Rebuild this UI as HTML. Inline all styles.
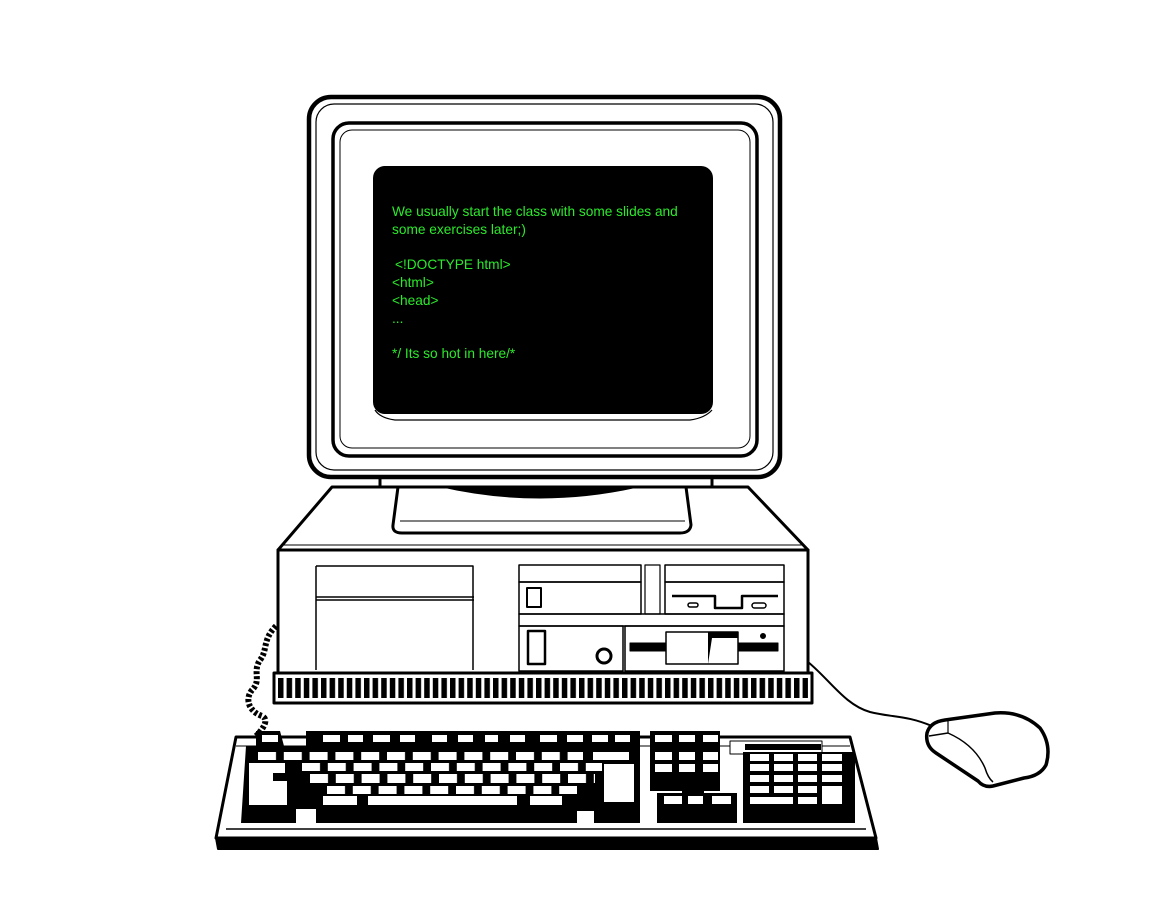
<!DOCTYPE html>
<html><head><meta charset="utf-8"><style>
html,body{margin:0;padding:0;background:#fff;width:1154px;height:920px;overflow:hidden}
svg{display:block}
text{font-family:"Liberation Sans",sans-serif;font-size:13.7px;fill:#2bea2b;letter-spacing:0}
</style></head><body>
<svg width="1154" height="920" viewBox="0 0 1154 920" xmlns="http://www.w3.org/2000/svg">
<defs>
<pattern id="r1" x="258" y="0" width="25.8" height="20" patternUnits="userSpaceOnUse"><rect x="0" y="0" width="18" height="20" fill="#fff"/></pattern>
<pattern id="r2" x="302" y="0" width="25.8" height="20" patternUnits="userSpaceOnUse"><rect x="0" y="0" width="18" height="20" fill="#fff"/></pattern>
<pattern id="r3" x="310" y="0" width="25.8" height="20" patternUnits="userSpaceOnUse"><rect x="0" y="0" width="18" height="20" fill="#fff"/></pattern>
<pattern id="r4" x="327" y="0" width="25.8" height="20" patternUnits="userSpaceOnUse"><rect x="0" y="0" width="18" height="20" fill="#fff"/></pattern>
<pattern id="vent" x="278" y="0" width="8.6" height="40" patternUnits="userSpaceOnUse"><rect x="0" y="0" width="5.5" height="40" fill="#000"/></pattern>
</defs>
<g fill="none" stroke="#000" stroke-linejoin="round">
<path d="M276,626 C262,640 268,650 260,660 C252,672 262,680 252,690 C244,700 250,712 262,716 C270,720 262,730 256,736" stroke-width="6" stroke-dasharray="3 2"/>
<path d="M808,662 C830,680 845,705 870,712 C895,718 905,715 932,726" stroke-width="2"/>
<path d="M332,487 L748,487 L808,550 L278,550 Z" fill="#fff" stroke-width="3"/>
<path d="M284,545 L802,545" stroke-width="1"/>
<rect x="278" y="550" width="530" height="123" fill="#fff" stroke-width="3"/>
<rect x="274" y="673" width="538" height="30" fill="#fff" stroke-width="3"/>
<rect x="278" y="678" width="530" height="20" fill="url(#vent)" stroke="none"/>
<path d="M316,566 L473,566 L473,670 M316,566 L316,670 M316,597 L474,597 M316,600 L474,600" stroke-width="1.5"/>
<rect x="519" y="565" width="122" height="17" stroke-width="1.5"/>
<rect x="519" y="582" width="122" height="32" stroke-width="1.5"/>
<rect x="527" y="588" width="14" height="19" stroke-width="2"/>
<rect x="645" y="565" width="15" height="49" stroke-width="1.2"/>
<rect x="665" y="565" width="119" height="17" stroke-width="1.5"/>
<rect x="665" y="582" width="119" height="32" stroke-width="1.5"/>
<path d="M672,596 L715,596 L715,608 L742,608 L742,596 L778,596" stroke-width="2.5"/>
<rect x="688" y="603" width="10" height="4" rx="2" stroke-width="1.5"/>
<rect x="752" y="603" width="14" height="5" rx="2.5" stroke-width="1.5"/>
<rect x="519" y="614" width="265" height="12" stroke-width="1.5"/>
<rect x="519" y="626" width="104" height="45" stroke-width="1.5"/>
<rect x="528" y="631" width="17" height="33" stroke-width="2.5"/>
<circle cx="604" cy="656" r="7" stroke-width="3"/>
<rect x="625" y="626" width="159" height="45" stroke-width="1.5"/>
<rect x="630" y="643" width="148" height="8" fill="#000" stroke-width="1"/>
<rect x="666" y="632" width="72" height="32" fill="#fff" stroke-width="1.5"/>
<path d="M708,632 L738,632 L738,638 L712,638 L708,664 Z" fill="#000" stroke="none"/>
<circle cx="763" cy="636" r="2.5" fill="#000"/>
<path d="M398,487 L686,487 L691,525 Q690,533 680,533 L402,533 Q392,533 393,525 Z" fill="#fff" stroke-width="3"/>
<path d="M400,521 L685,521" stroke-width="1"/>
<path d="M440,487 Q540,510 640,487 Z" fill="#000" stroke="none"/>
<rect x="380" y="455" width="332" height="32" fill="#fff" stroke-width="3"/>
<rect x="309" y="97" width="471" height="380" rx="22" fill="#fff" stroke-width="4.5"/>
<rect x="316" y="104" width="457" height="366" rx="18" stroke-width="1.2"/>
<rect x="333" y="123" width="424" height="333" rx="16" fill="#fff" stroke-width="3.5"/>
<rect x="340" y="130" width="410" height="318" rx="12" stroke-width="1"/>
<rect x="373" y="166" width="340" height="248" rx="12" fill="#000" stroke="none"/>
<path d="M375,410 Q380,418 395,420 L690,420 Q705,418 712,410" stroke-width="1.2"/>
</g>
<text x="392" y="216">We usually start the class with some slides and</text>
<text x="392" y="234">some exercises later;)</text>
<text x="395" y="269">&lt;!DOCTYPE html&gt;</text>
<text x="392" y="287">&lt;html&gt;</text>
<text x="392" y="305">&lt;head&gt;</text>
<text x="392" y="323">...</text>
<text x="392" y="358">*/ Its so hot in here/*</text>
<g stroke="#000" stroke-linejoin="round">
<path d="M236,737 L850,737 L876,838 L216,838 Z" fill="#fff" stroke-width="3"/>
<path d="M216,838 L876,838 L878,849 L218,849 Z" fill="#000" stroke-width="2"/>
<path d="M226,829 L866,829" stroke-width="1.5" fill="none"/>
<path d="M236,746 L850,746" stroke-width="1" fill="none"/>
<path d="M256,731 L280,731 L284,746 L306,746 L306,731 L640,731 L640,823 L241,823 L246,746 L256,746 Z" fill="#000" stroke="none"/>
<g fill="#fff" stroke="none">
<rect x="262" y="735" width="16" height="7"/><rect x="323" y="735" width="17" height="7"/><rect x="348" y="735" width="15" height="7"/><rect x="373" y="735" width="17" height="7"/><rect x="400" y="735" width="15" height="7"/><rect x="432" y="735" width="15" height="7"/><rect x="458" y="735" width="15" height="7"/><rect x="485" y="735" width="13" height="7"/><rect x="510" y="735" width="15" height="7"/><rect x="540" y="735" width="17" height="7"/><rect x="567" y="735" width="16" height="7"/><rect x="592" y="735" width="16" height="7"/><rect x="615" y="735" width="15" height="7"/>
<rect x="258" y="752" width="325" height="8" fill="url(#r1)"/>
<rect x="593" y="752" width="36" height="8"/>
<rect x="302" y="763" width="300" height="8" fill="url(#r2)"/>
<rect x="310" y="774" width="285" height="9" fill="url(#r3)"/>
<rect x="327" y="786" width="250" height="8" fill="url(#r4)"/>
<rect x="604" y="764" width="30" height="38"/>
<rect x="249" y="763" width="36" height="10"/>
<rect x="249" y="773" width="24" height="8"/>
<rect x="249" y="781" width="38" height="24"/>
<rect x="323" y="796" width="34" height="9"/>
<rect x="368" y="796" width="149" height="9"/>
<rect x="530" y="796" width="32" height="9"/>
<rect x="296" y="809" width="20" height="14"/>
<rect x="577" y="811" width="17" height="12"/>
</g>
<rect x="650" y="731" width="70" height="60" fill="#000" stroke="none"/>
<rect x="657" y="793" width="80" height="30" fill="#000" stroke="none"/>
<g fill="#fff" stroke="none">
<rect x="655" y="735" width="17" height="7"/><rect x="679" y="735" width="16" height="7"/><rect x="703" y="735" width="15" height="7"/>
<rect x="655" y="752" width="17" height="8"/><rect x="679" y="752" width="16" height="8"/><rect x="703" y="752" width="15" height="8"/>
<rect x="655" y="764" width="17" height="8"/><rect x="679" y="764" width="16" height="8"/><rect x="703" y="764" width="15" height="8"/>
<rect x="664" y="796" width="18" height="8"/><rect x="688" y="796" width="15" height="8"/><rect x="712" y="796" width="19" height="8"/>
</g>
<rect x="682" y="786" width="22" height="9" fill="#000" stroke="none"/>
<rect x="730" y="741" width="92" height="13" fill="#fff" stroke-width="1"/>
<rect x="745" y="744" width="76" height="6" fill="#000" stroke="none"/>
<rect x="743" y="752" width="112" height="71" fill="#000" stroke="none"/>
<g fill="#fff" stroke="none">
<rect x="750" y="754" width="19" height="7"/><rect x="774" y="754" width="19" height="7"/><rect x="798" y="754" width="19" height="7"/><rect x="822" y="754" width="20" height="7"/>
<rect x="750" y="764" width="19" height="7"/><rect x="774" y="764" width="19" height="7"/><rect x="798" y="764" width="19" height="7"/><rect x="822" y="764" width="20" height="7"/>
<rect x="750" y="775" width="19" height="7"/><rect x="774" y="775" width="19" height="7"/><rect x="798" y="775" width="19" height="7"/><rect x="822" y="775" width="20" height="7"/>
<rect x="750" y="786" width="19" height="7"/><rect x="774" y="786" width="19" height="7"/><rect x="798" y="786" width="19" height="7"/><rect x="822" y="786" width="20" height="18"/>
<rect x="750" y="797" width="43" height="7"/><rect x="798" y="797" width="19" height="7"/>
</g>
</g>
<g stroke="#000" stroke-linejoin="round" fill="#fff">
<path d="M927,733 Q930,722 945,720 L995,713 Q1022,711 1040,728 Q1052,745 1046,765 Q1040,776 1024,778 L993,786 Q984,788 978,781 L936,753 Q925,746 927,733 Z" stroke-width="3.5"/>
<path d="M929,736 L948,733 Q975,745 985,768 Q988,778 993,782" fill="none" stroke-width="1.5"/>
<path d="M948,721 L948,733" fill="none" stroke-width="1.2"/>
</g>
</svg>
</body></html>
